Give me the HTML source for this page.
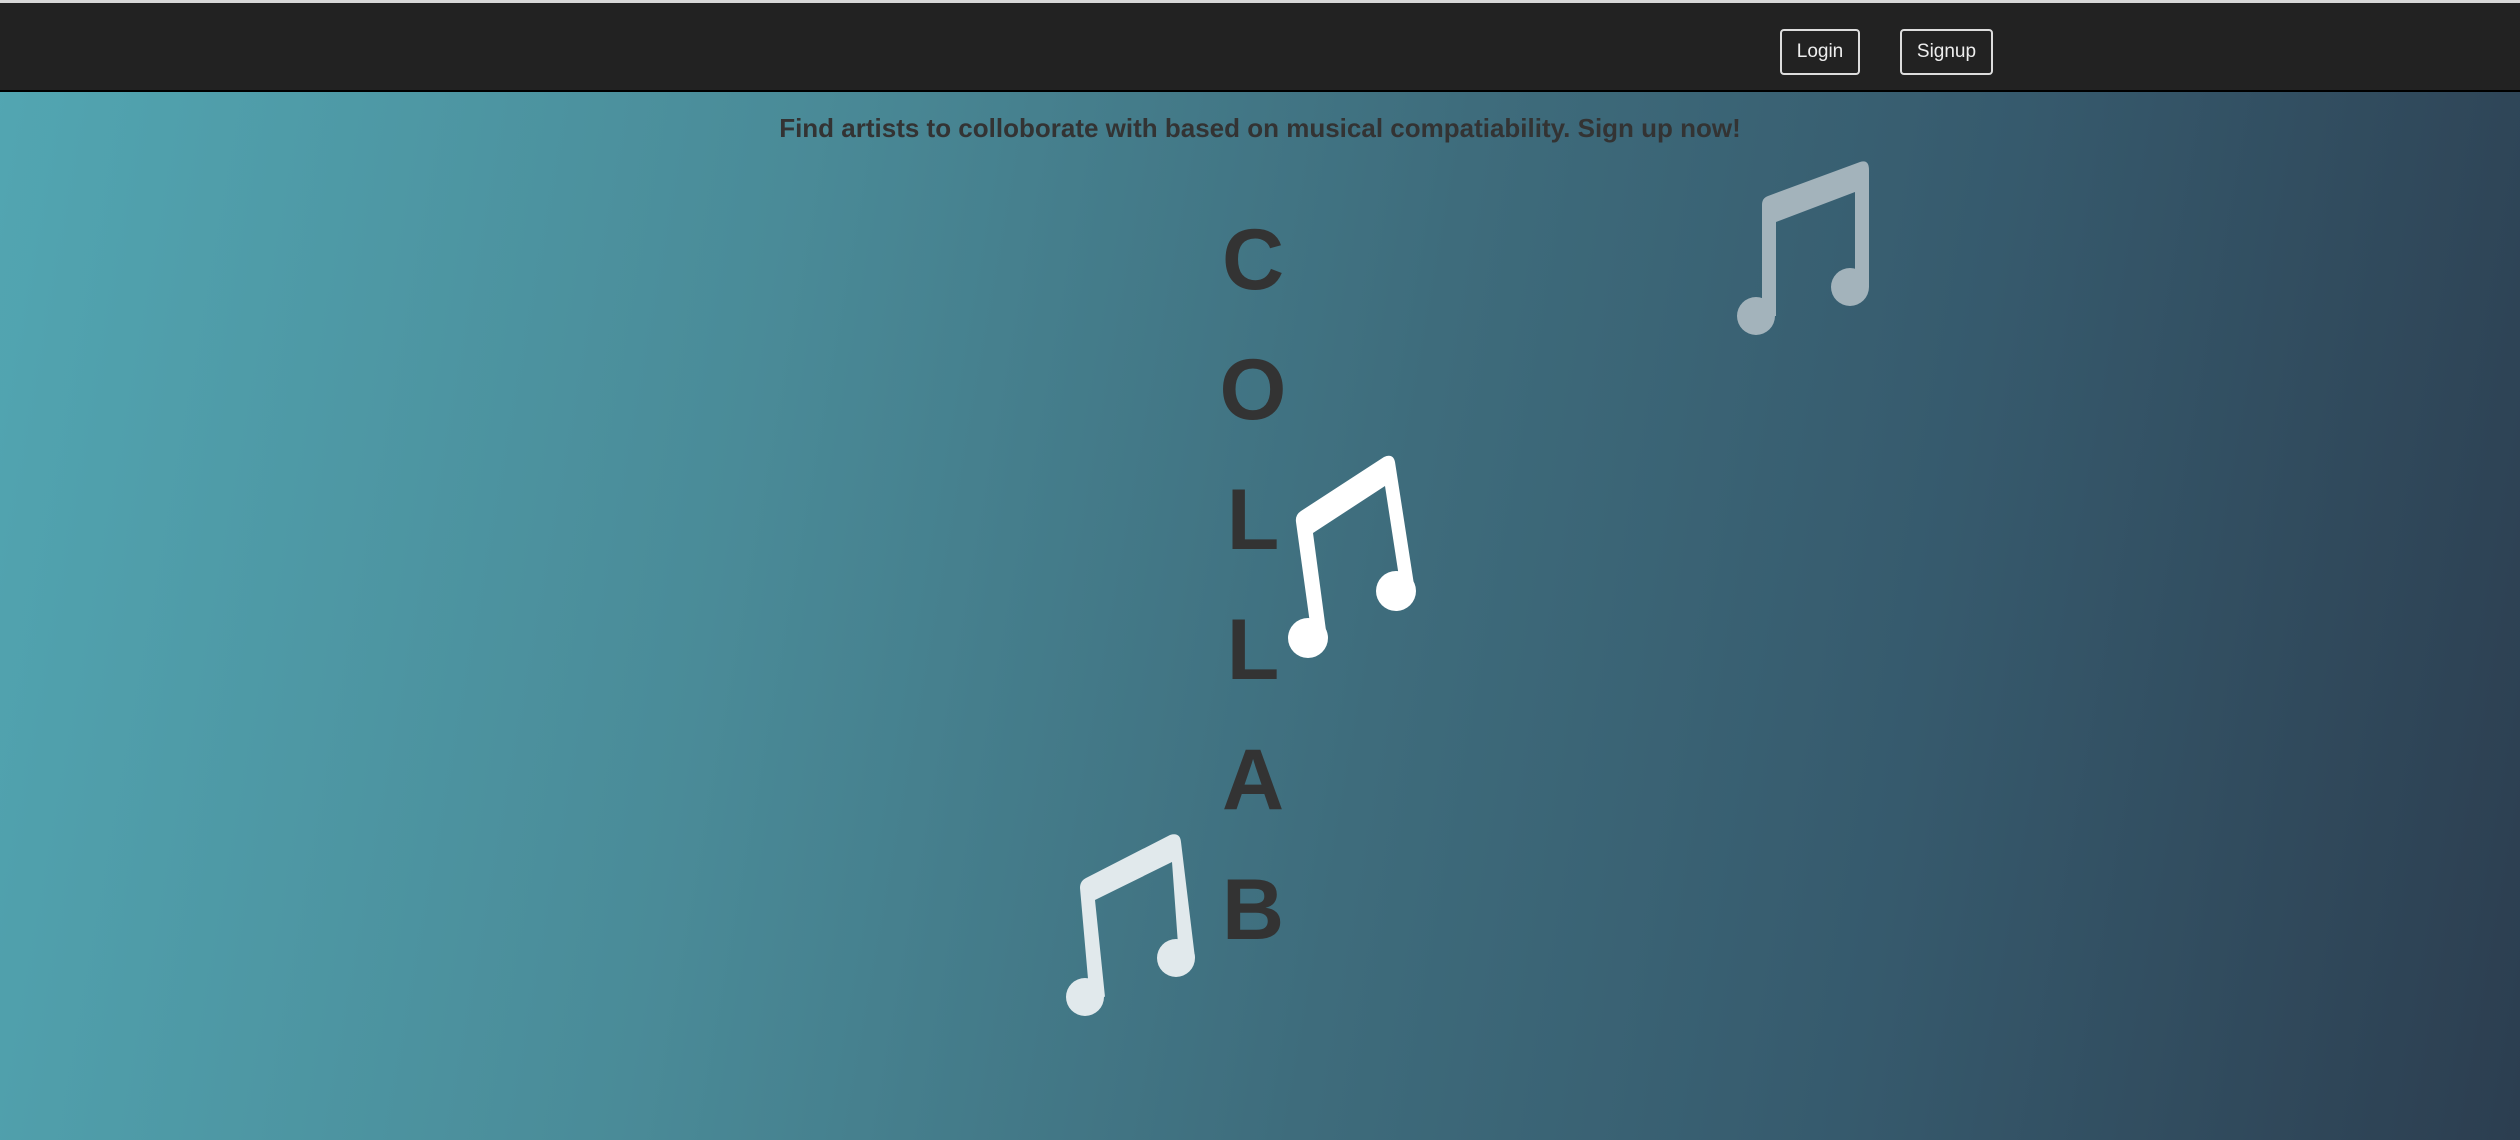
<!DOCTYPE html>
<html><head><meta charset="utf-8">
<style>
html,body{margin:0;padding:0;width:2520px;height:1140px;overflow:hidden;}
body{background:linear-gradient(100deg,#52a6b2 0%,#4a8b98 30%,#3e6c7c 55%,#365a6d 75%,#2c3e50 100%);font-family:"Liberation Sans",sans-serif;position:relative;}
.nav{position:absolute;left:0;top:0;width:2520px;height:92px;background:#222;border-top:3px solid #d8d8d8;border-bottom:2px solid #000;box-sizing:border-box;}
.btn{position:absolute;top:26px;height:46px;border:2px solid #ddd;border-radius:4px;box-sizing:border-box;color:#eee;font-size:19px;line-height:42px;text-align:center;}
.tag{position:absolute;left:0;width:2520px;top:113px;text-align:center;color:#333;font-size:26px;font-weight:bold;}
.l{position:absolute;left:1153px;width:200px;text-align:center;color:#333;font-size:86px;font-weight:bold;line-height:100px;height:100px;}
svg{position:absolute;left:0;top:0;}
</style></head><body>
<div class="nav">
<div class="btn" style="left:1780px;width:80px;">Login</div>
<div class="btn" style="left:1900px;width:93px;">Signup</div>
</div>
<div class="tag">Find artists to colloborate with based on musical compatiability. Sign up now!</div>
<div class="l" style="top:210px">C</div>
<div class="l" style="top:340px">O</div>
<div class="l" style="top:470px">L</div>
<div class="l" style="top:600px">L</div>
<div class="l" style="top:730px">A</div>
<div class="l" style="top:860px">B</div>
<svg width="2520" height="1140" viewBox="0 0 2520 1140">
<g fill="#a3b3bb">
<path d="M1762,316 L1762,205 Q1762,198 1768,196 L1860,162 Q1869,159 1869,170 L1869,287 L1855,287 L1855,192 L1776,222 L1776,316 Z"/>
<circle cx="1756" cy="316" r="19"/><circle cx="1850" cy="287" r="19"/>
</g>
<g fill="#ffffff" transform="translate(0,-43)">
<path d="M1312,681 L1296,565 Q1295,558 1301,554 L1384,500 Q1393,496 1395,505 L1415,634 L1399,620 L1385,529 L1313,576 L1327,681 Z"/>
<circle cx="1308" cy="681" r="20"/><circle cx="1396" cy="634" r="20"/>
</g>
<g fill="#e1e9ec">
<path d="M1089,990 L1080,888 Q1080,881 1086,878 L1170,835 Q1180,832 1181,842 L1195,958 L1179,958 L1172,862 L1095,900 L1105,997 Z"/>
<circle cx="1085" cy="997" r="19"/><circle cx="1176" cy="958" r="19"/>
</g>
</svg>
</body></html>
